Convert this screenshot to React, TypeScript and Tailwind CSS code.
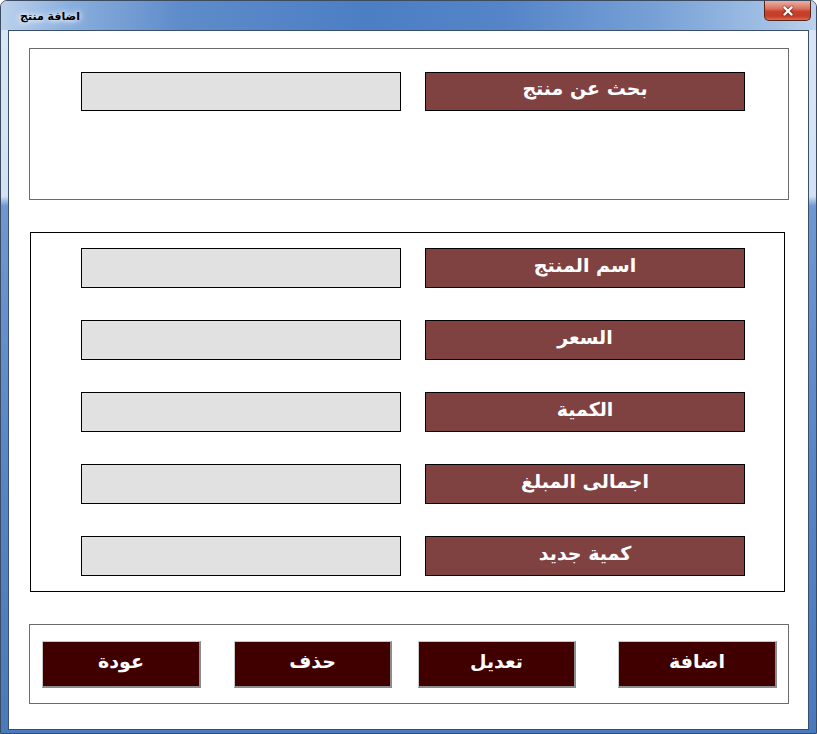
import { X } from "lucide-react"

const rows = ['اسم المنتج', 'السعر', 'الكمية', 'اجمالى المبلغ', 'كمية جديد']

const buttons = [
  { label: 'عودة', cls: 'ml-[12px] w-[159px]' },
  { label: 'حذف', cls: 'ml-[33px] w-[158px]' },
  { label: 'تعديل', cls: 'ml-[26px] w-[158px]' },
  { label: 'اضافة', cls: 'ml-[42px] w-[159px]' },
]

function Field({ label, h }: { label: string, h: string }) {
  return (
    <div className="flex gap-[24px]">
      <div className={`w-[320px] ${h} border border-black bg-[#e1e1e1]`} />
      <div className={`w-[320px] ${h} border border-black bg-[#804141] flex justify-center items-center pb-[6px]`}>
        <span className="text-white font-bold text-[19px] leading-none" dir="rtl">{label}</span>
      </div>
    </div>
  )
}

export default function App() {
  return (
    <div
      className="w-[817px] h-[734px] flex flex-col border border-[#3c4b60] rounded-t-[7px] overflow-hidden bg-[linear-gradient(180deg,#d9e6f5_0px,#d3e2f3_195px,#6f98d2_205px,#5583c5_500px,#4a79bd_734px)]"
      style={{ fontFamily: '"DejaVu Sans", "Liberation Sans", sans-serif' }}
    >
      {/* title bar */}
      <div className="h-[29px] shrink-0 flex items-start justify-between bg-[linear-gradient(90deg,#bcd2ec_0%,#8cb0de_8%,#5e8cca_22%,#4c7ec4_45%,#5585c8_62%,#76a0d6_80%,#a3c1e5_95%,#bcd2ec_100%)]">
        <div className="pl-[19px] pt-[10px] text-[11px] font-bold text-black leading-none [text-shadow:0_0_5px_#ffffff,0_0_8px_#ffffff]" dir="rtl">
          اضافة منتج
        </div>
        <div className="mr-[5px] w-[47px] h-[20px] border border-t-0 border-[#5a2419] rounded-b-[5px] flex items-center justify-center bg-[linear-gradient(180deg,#eab0a4_0%,#d9735f_40%,#c7412b_55%,#c63d27_80%,#db6a4f_100%)]">
          <X size={14} strokeWidth={4} className="text-white drop-shadow-[0_0_1px_#3a1008]" />
        </div>
      </div>

      {/* client area */}
      <div className="flex-1 flex px-[7px] pb-[3px]">
        <div className="flex-1 border border-[#3a4f6c] bg-white flex flex-col">
          <div className="ml-[20px] mt-[17px] w-[760px] h-[152px] border border-[#6b6b6b] pl-[51px] pt-[23px]">
            <Field label="بحث عن منتج" h="h-[39px]" />
          </div>

          <div className="ml-[21px] mt-[32px] w-[755px] h-[360px] border border-black pl-[50px] pt-[15px] flex flex-col gap-[32px]">
            {rows.map((r) => (
              <Field key={r} label={r} h="h-[40px]" />
            ))}
          </div>

          <div className="ml-[20px] mt-[32px] w-[760px] h-[80px] border border-[#6b6b6b] pt-[16px] flex">
            {buttons.map((b) => (
              <div
                key={b.label}
                className={`${b.cls} h-[47px] bg-[#400000] border-t border-l border-[#c8c8c8] border-b-2 border-r-2 border-b-[#8c8c8c] border-r-[#8c8c8c] flex justify-center items-center pb-[6px]`}
              >
                <span className="text-white font-bold text-[19px] leading-none" dir="rtl">{b.label}</span>
              </div>
            ))}
          </div>
        </div>
      </div>
    </div>
  )
}
